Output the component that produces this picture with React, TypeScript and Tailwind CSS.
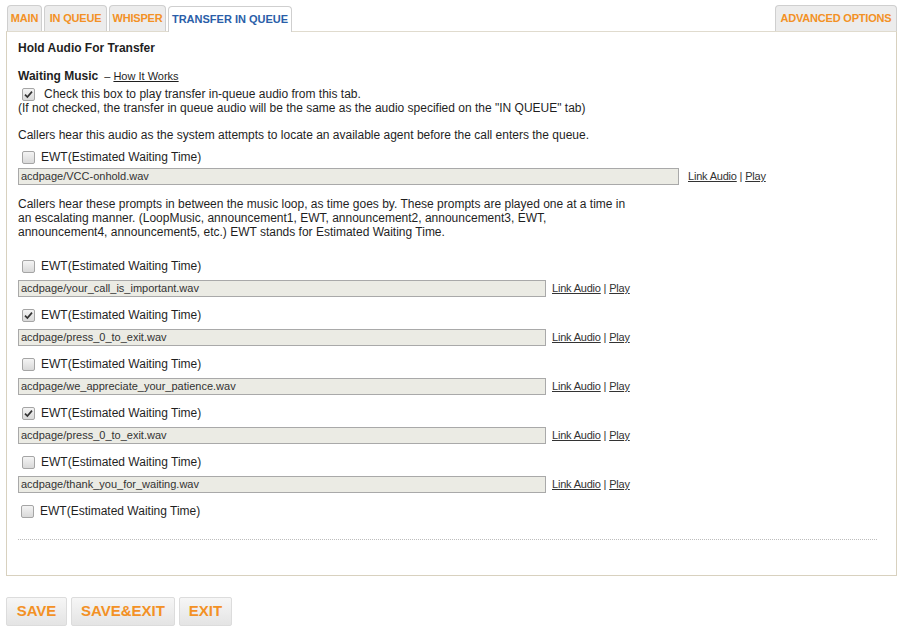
import React from "react";

const Check = ({ checked = false }: { checked?: boolean }) => (
  <span className="inline-flex h-[13px] w-[13px] shrink-0 items-center justify-center rounded-[2px] border border-[#a5a5a5] bg-gradient-to-b from-[#f4f4f4] to-[#d9d9d9]">
    {checked && (
      <svg width="9" height="9" viewBox="0 0 9 9">
        <path d="M1 4.6 L3.4 7 L8 1.6" fill="none" stroke="#333" strokeWidth="1.7" />
      </svg>
    )}
  </span>
);

const Links = ({ gap }: { gap: string }) => (
  <span className={`${gap} text-[11px] tracking-[-0.2px] text-[#333]`}>
    <span className="underline">Link Audio</span> | <span className="underline">Play</span>
  </span>
);

const EwtRow = ({ checked, className }: { checked?: boolean; className: string }) => (
  <div className={`flex h-[14px] items-center gap-[6px] pl-[4px] ${className}`}>
    <Check checked={checked} />
    <span className="text-[12px]">EWT(Estimated Waiting Time)</span>
  </div>
);

const AudioInput = ({ value, wide }: { value: string; wide?: boolean }) => (
  <div className="flex items-center">
    <div
      className={`flex h-[17px] items-center border border-[#a9a9a9] bg-[#ebebe4] pl-[2px] text-[11px] text-[#333] ${
        wide ? "w-[661px]" : "w-[528px]"
      }`}
    >
      {value}
    </div>
    <Links gap={wide ? "ml-[9px]" : "ml-[6px]"} />
  </div>
);

const prompts = [
  { file: "acdpage/your_call_is_important.wav", checked: false },
  { file: "acdpage/press_0_to_exit.wav", checked: true },
  { file: "acdpage/we_appreciate_your_patience.wav", checked: false },
  { file: "acdpage/press_0_to_exit.wav", checked: true },
  { file: "acdpage/thank_you_for_waiting.wav", checked: false },
];

const Tab = ({ label, w, active }: { label: string; w: string; active?: boolean }) => (
  <div
    className={`flex h-[26px] ${w} items-center justify-center whitespace-nowrap rounded-t-[4px] border border-b-0 text-[11px] font-bold ${
      active
        ? "relative top-[1px] border-[#cfcfcf] bg-white text-[#2a5ea8]"
        : "border-[#cfcfcf] bg-[#ececec] tracking-[-0.2px] text-[#f39125]"
    }`}
  >
    {label}
  </div>
);

const buttons = [
  { label: "SAVE", w: "w-[61px]" },
  { label: "SAVE&EXIT", w: "w-[104px]" },
  { label: "EXIT", w: "w-[53px]" },
];

export default function App() {
  return (
    <div className="min-h-screen bg-white pl-[6px] pr-[3px] pt-[5px] font-['Liberation_Sans',Arial,sans-serif] text-[#1f1f1f]">
      <div className="flex items-end justify-between pl-[1px]">
        <div className="flex gap-[2px]">
          <Tab label="MAIN" w="w-[35px]" />
          <Tab label="IN QUEUE" w="w-[63px]" />
          <Tab label="WHISPER" w="w-[57px]" />
          <Tab label="TRANSFER IN QUEUE" w="w-[124px]" active />
        </div>
        <Tab label="ADVANCED OPTIONS" w="w-[122px]" />
      </div>

      <div className="border border-[#d8d1bf] border-t-[#e0dbce] px-[11px] pb-[35px] pt-[9px]">
        <div className="h-[14px] text-[12px] font-bold leading-[14px]">Hold Audio For Transfer</div>

        <div className="mt-[14px] flex h-[14px] items-center text-[12px] leading-[14px]">
          <span className="font-bold">Waiting Music</span>
          <span className="ml-[6px] text-[11px]">
            – <span className="underline">How It Works</span>
          </span>
        </div>

        <div className="mt-[4px] flex h-[14px] items-center gap-[9px] pl-[4px] text-[12px]">
          <Check checked />
          <span>Check this box to play transfer in-queue audio from this tab.</span>
        </div>
        <div className="h-[14px] text-[12px] leading-[14px]">
          (If not checked, the transfer in queue audio will be the same as the audio specified on the "IN QUEUE" tab)
        </div>

        <div className="mt-[13px] h-[14px] text-[12px] leading-[14px]">
          Callers hear this audio as the system attempts to locate an available agent before the call enters the queue.
        </div>

        <EwtRow className="mt-[8px]" />
        <div className="mt-[4px]">
          <AudioInput value="acdpage/VCC-onhold.wav" wide />
        </div>

        <p className="mt-[12px] w-[620px] text-[12px] leading-[14px]">
          Callers hear these prompts in between the music loop, as time goes by. These prompts are played one at a time in
          an escalating manner. (LoopMusic, announcement1, EWT, announcement2, announcement3, EWT, announcement4,
          announcement5, etc.) EWT stands for Estimated Waiting Time.
        </p>

        {prompts.map((p, i) => (
          <div key={i}>
            <EwtRow checked={p.checked} className={i === 0 ? "mt-[20px]" : "mt-[11px]"} />
            <div className="mt-[7px]">
              <AudioInput value={p.file} />
            </div>
          </div>
        ))}

        <EwtRow className="mt-[11px] !pl-[3px]" />

        <div className="mt-[21px] mr-[8px] border-t border-dotted border-[#bdbdbd]" />
      </div>

      <div className="mt-[21px] flex gap-[4px]">
        {buttons.map((b) => (
          <button
            key={b.label}
            className={`h-[29px] ${b.w} rounded-[2px] border border-[#dcdcdc] bg-gradient-to-b from-[#f6f6f6] to-[#e4e4e4] text-[15px] font-bold text-[#f39125]`}
          >
            {b.label}
          </button>
        ))}
      </div>
    </div>
  );
}
